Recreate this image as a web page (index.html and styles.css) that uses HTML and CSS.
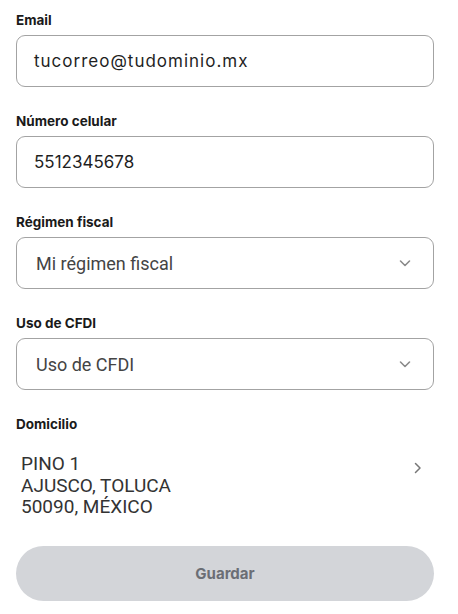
FILE: index.html
```html
<!DOCTYPE html>
<html lang="es">
<head>
    <meta charset="UTF-8" />
    <meta name="viewport" content="width=device-width, initial-scale=1.0"/>
    <title>Datos de facturación</title>
    <link rel="stylesheet" href="styles.css">
</head>
<body>
    <form class="billing-form">
        <div class="field">
            <label class="field-label">Email</label>
            <div class="field-box">
                <span class="field-value typed email">tucorreo@tudominio.mx</span>
            </div>
        </div>

        <div class="field">
            <label class="field-label">Número celular</label>
            <div class="field-box">
                <span class="field-value typed">5512345678</span>
            </div>
        </div>

        <div class="field">
            <label class="field-label">Régimen fiscal</label>
            <div class="field-box select">
                <span class="field-value placeholder">Mi régimen fiscal</span>
                <svg class="chevron" width="14" height="14" viewBox="0 0 14 14"><path d="M2.5 5 L7 9.5 L11.5 5" fill="none" stroke="#8a8a8a" stroke-width="1.6" stroke-linecap="round" stroke-linejoin="round"/></svg>
            </div>
        </div>

        <div class="field">
            <label class="field-label">Uso de CFDI</label>
            <div class="field-box select">
                <span class="field-value placeholder">Uso de CFDI</span>
                <svg class="chevron" width="14" height="14" viewBox="0 0 14 14"><path d="M2.5 5 L7 9.5 L11.5 5" fill="none" stroke="#8a8a8a" stroke-width="1.6" stroke-linecap="round" stroke-linejoin="round"/></svg>
            </div>
        </div>

        <div class="field">
            <label class="field-label">Domicilio</label>
            <div class="address-row">
                <div class="address">
                    <div>PINO 1</div>
                    <div>AJUSCO, TOLUCA</div>
                    <div>50090, MÉXICO</div>
                </div>
                <svg class="chevron-right" width="12" height="14" viewBox="0 0 12 14"><path d="M3.5 2.5 L8 7 L3.5 11.5" fill="none" stroke="#777" stroke-width="1.5" stroke-linecap="round" stroke-linejoin="round"/></svg>
            </div>
        </div>

        <button type="button" class="save-btn">Guardar</button>
    </form>
</body>
</html>
```

FILE: styles.css
```css
body {
    margin: 0;
    padding: 0;
    background: #ffffff;
    font-family: 'Roboto', 'Liberation Sans', sans-serif;
    color: #222;
}

.billing-form {
    display: flex;
    flex-direction: column;
    padding: 11px 24px 0 16px;
}

.field {
    display: flex;
    flex-direction: column;
    gap: 6px;
    margin-bottom: 25px;
}

.field-label {
    font-family: 'Inter', 'Liberation Sans', sans-serif;
    font-weight: 700;
    font-size: 13.5px;
    line-height: 18px;
    color: #1a1a1a;
}

.field-box {
    height: 52px;
    box-sizing: border-box;
    border: 1.5px solid #a3a3a3;
    border-radius: 9px;
    display: flex;
    align-items: center;
    padding: 0 16px 0 17px;
}

.field-value {
    font-size: 18px;
    color: #1f1f1f;
}

/* Eingetippte Werte sind etwas breiter gesetzt */
.field-value.typed {
    font-family: 'Inter', 'Liberation Sans', sans-serif;
    font-size: 17px;
}

.field-value.email {
    letter-spacing: 1px;
}

.field-value.placeholder {
    color: #444;
    padding-left: 2px;
}

.select {
    justify-content: space-between;
}

.chevron {
    margin-right: 5px;
}

/* Domicilio */
.address-row {
    display: flex;
    justify-content: space-between;
    align-items: flex-start;
    padding: 14px 10px 0 5px;
}

.address {
    font-size: 19px;
    line-height: 21.5px;
    color: #333;
}

.chevron-right {
    margin-top: 8px;
}

.save-btn {
    margin-top: 3px;
    height: 55px;
    border: none;
    border-radius: 28px;
    background: #d3d5d9;
    color: #6b6e75;
    font-family: 'Inter', 'Liberation Sans', sans-serif;
    font-weight: 700;
    font-size: 15px;
}
```
